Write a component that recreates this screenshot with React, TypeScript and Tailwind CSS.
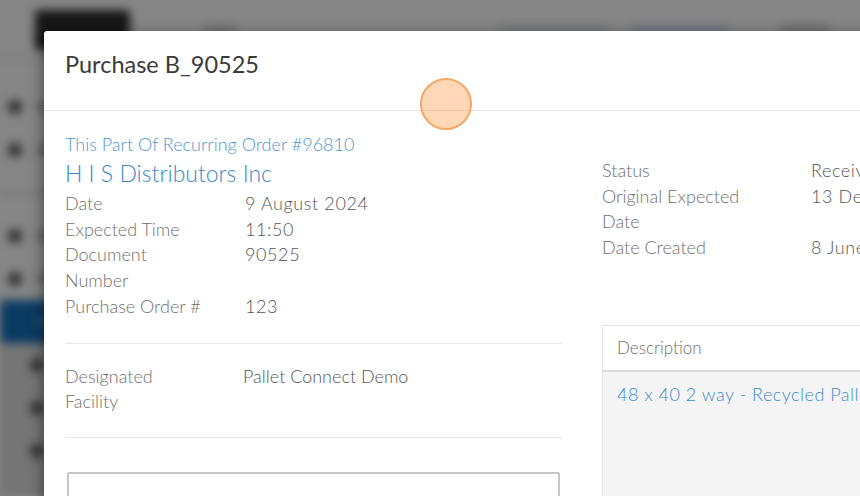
import React from "react";

interface Row {
  label: string;
  value: string;
}

const orderRows: Row[] = [
  { label: "Date", value: "9 August 2024" },
  { label: "Expected Time", value: "11:50" },
  { label: "Document Number", value: "90525" },
  { label: "Purchase Order #", value: "123" },
];

const statusRows: Row[] = [
  { label: "Status", value: "Received" },
  { label: "Original Expected Date", value: "13 December 2023" },
  { label: "Date Created", value: "8 June 2024" },
];

function SideItem({ active, sub }: { active?: boolean; sub?: boolean }) {
  return (
    <div
      className={`flex h-[43px] items-center ${active ? "bg-[#1670bd]" : ""} ${
        sub ? "pl-[30px]" : "pl-[8px]"
      }`}
    >
      <div className={`h-[14px] w-[14px] rounded-full ${active ? "bg-[#1670bd]" : "bg-[#5a5a5a]"}`} />
      <div className={`ml-[14px] h-[8px] w-[110px] rounded ${active ? "bg-[#5f9ad2]" : "bg-[#b0b0b0]"}`} />
    </div>
  );
}

export default function App() {
  return (
    <div className="relative h-[496px] w-[860px] overflow-hidden bg-white font-['Lato','Liberation_Sans',sans-serif]">
      {/* Page behind the modal */}
      <div className="flex h-full flex-col blur-[5px]">
        <header className="flex h-[60px] shrink-0 items-center border-b border-[#e2e2e2] bg-white">
          <div className="ml-[35px] h-[40px] w-[95px] rounded bg-[#2c2c2c]" />
          <div className="ml-[72px] h-[10px] w-[36px] rounded bg-[#d4d4d4]" />
          <div className="ml-[262px] h-[8px] w-[110px] rounded bg-[#d6dbea]" />
          <div className="ml-[20px] h-[8px] w-[100px] rounded bg-[#cdd4ec]" />
          <div className="ml-[50px] h-[10px] w-[50px] rounded bg-[#cfcfcf]" />
        </header>
        <div className="flex flex-1">
          <aside className="flex w-[240px] flex-col bg-white pt-[25px]">
            <SideItem />
            <SideItem />
            <div className="flex h-[43px] items-center">
              <div className="h-[2px] w-[120px] bg-[#cfcfcf]" />
            </div>
            <SideItem />
            <SideItem />
            <SideItem active />
            <div className="flex-1 bg-[#e0e0e0]">
              <SideItem sub />
              <SideItem sub />
              <SideItem sub />
            </div>
          </aside>
          <main className="flex-1 bg-[#f5f5f5]" />
        </div>
      </div>
      <div className="absolute inset-0 bg-black/[0.48]" />

      {/* Modal */}
      <div className="absolute left-[44px] top-[31px] w-[900px] rounded-[3px] bg-white font-light shadow-[0_5px_15px_rgba(0,0,0,0.5)]">
        <div className="h-[80px] border-b border-[#e5e5e5] px-[21px] pt-[20px]">
          <h4 className="text-[23.5px] font-normal leading-[26px] text-[#3a3a3a]">Purchase B_90525</h4>
        </div>

        <div className="px-[21px] pt-[20px]">
          <a className="block text-[18px] leading-[26px] text-[#4f97d1]">
            This Part Of Recurring Order #96810
          </a>

          <div className="grid grid-cols-[497px_1fr] gap-x-[40px]">
            {/* Left column */}
            <div>
              <div className="text-[23px] leading-[32px] text-[#3b88c9]">H I S Distributors Inc</div>
              <dl className="mt-[2px] grid grid-cols-[145px_1fr] gap-x-[35px] text-[18px] leading-[25.7px]">
                {orderRows.map((row) => (
                  <React.Fragment key={row.label}>
                    <dt className="text-[#6f6f6f]">{row.label}</dt>
                    <dd className="tracking-[0.6px] text-[#555]">{row.value}</dd>
                  </React.Fragment>
                ))}
              </dl>

              <hr className="mt-[23px] border-t border-[#e8e8e8]" />

              <dl className="mt-[20px] grid grid-cols-[145px_1fr] gap-x-[33px] text-[18px] leading-[25.7px]">
                <dt className="text-[#6f6f6f]">Designated Facility</dt>
                <dd className="text-[#555]">Pallet Connect Demo</dd>
              </dl>

              <hr className="mt-[22px] border-t border-[#e8e8e8]" />

              <textarea className="mt-[34px] ml-[2px] block h-[80px] w-[493px] resize-none rounded-[2px] border-2 border-[#c6c6c6] outline-none" />
            </div>

            {/* Right column */}
            <div>
              <dl className="mt-[1px] grid grid-cols-[150px_1fr] gap-x-[59px] text-[18px] leading-[25.7px]">
                {statusRows.map((row) => (
                  <React.Fragment key={row.label}>
                    <dt className="text-[#6f6f6f]">{row.label}</dt>
                    <dd className="whitespace-nowrap tracking-[0.6px] text-[#555]">{row.value}</dd>
                  </React.Fragment>
                ))}
              </dl>

              <table className="mt-[64px] w-full border border-[#e6e6e6] text-left">
                <thead>
                  <tr className="border-b-2 border-[#dddddd]">
                    <th className="px-[14px] py-[9px] text-[17px] font-light leading-[26px] text-[#6f6f6f]">
                      Description
                    </th>
                  </tr>
                </thead>
                <tbody>
                  <tr className="bg-[#f4f4f4]">
                    <td className="h-[140px] px-[14px] pt-[9px] align-top text-[18px] leading-[26px] tracking-[0.5px] text-[#3d8ccc]">
                      48 x 40 2 way - Recycled Pallet
                    </td>
                  </tr>
                </tbody>
              </table>
            </div>
          </div>
        </div>
      </div>

      {/* Click indicator */}
      <div className="absolute left-[420px] top-[78px] h-[52px] w-[52px] rounded-full border-2 border-[#f3a866] bg-[rgba(251,176,110,0.5)]" />
    </div>
  );
}
